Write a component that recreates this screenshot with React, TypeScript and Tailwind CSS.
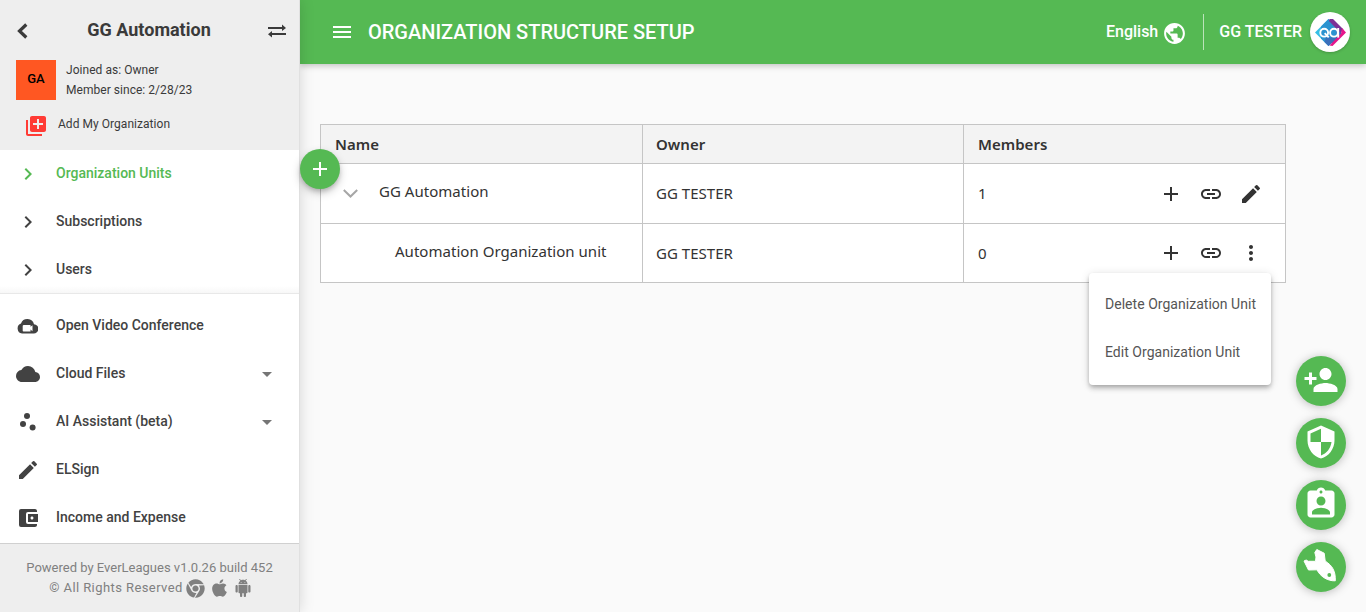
import type { ReactNode } from "react";
import {
  MdAccountBalanceWallet,
  MdAdd,
  MdArrowDropDown,
  MdAssignmentInd,
  MdChevronRight,
  MdCloud,
  MdEdit,
  MdLibraryAdd,
  MdLink,
  MdMenu,
  MdMoreVert,
  MdPublic,
  MdScatterPlot,
  MdSecurity,
} from "react-icons/md";
import { FaApple, FaChrome } from "react-icons/fa";

function BackIcon() {
  return (
    <svg className="mt-0.5 h-4 w-3" viewBox="0 0 12 16" fill="none" stroke="currentColor" strokeWidth="3.200">
      <path d="M10.300 1.500 3.500 8l6.800 6.500" />
    </svg>
  );
}

function SwapIcon() {
  return (
    <svg className="mt-0.5 h-[14px] w-[18px]" viewBox="0 0 18 14" fill="currentColor">
      <path d="M0 3h14V.5L18 4l-4 3V5H0zM18 9H4V7L0 10.200 4 13.500V11h14z" />
    </svg>
  );
}

function CloudCameraIcon() {
  return (
    <svg className="mr-px h-[15px] w-[21px]" viewBox="0 0 21 15">
      <path
        fill="currentColor"
        d="M17 5.200A6.800 6.800 0 0 0 4 4.500a5.200 5.200 0 0 0 1 10h11.500a4.600 4.600 0 0 0 .5-9.300z"
      />
      <path fill="#fff" d="M6.500 6h7v1.800L15.500 6.200v6l-2-1.600V12.500h-7a.8.8 0 0 1-.8-.8v-5z" />
    </svg>
  );
}

function AndroidIcon() {
  return (
    <svg className="h-[18px] w-[18px]" viewBox="0 0 24 24" fill="currentColor">
      <path d="M6 18c0 .55.45 1 1 1h1v3.5c0 .83.67 1.500 1.500 1.500s1.500-.67 1.500-1.500V19h2v3.500c0 .83.67 1.500 1.500 1.500s1.500-.67 1.500-1.500V19h1c.55 0 1-.45 1-1V8H6v10zM3.500 8C2.670 8 2 8.670 2 9.500v7c0 .83.67 1.500 1.500 1.500S5 17.330 5 16.500v-7C5 8.670 4.330 8 3.500 8zm17 0c-.83 0-1.500.67-1.500 1.500v7c0 .83.67 1.500 1.500 1.500s1.500-.67 1.500-1.500v-7c0-.83-.67-1.500-1.500-1.500zm-4.970-5.840l1.300-1.300c.2-.2.2-.51 0-.71-.2-.2-.51-.2-.71 0l-1.480 1.480C13.850 1.230 12.950 1 12 1c-.96 0-1.860.23-2.660.63L7.850.15c-.2-.2-.51-.2-.71 0-.2.2-.2.51 0 .71l1.310 1.310C6.970 3.260 6 5.010 6 7h12c0-1.990-.97-3.750-2.470-4.840zM10 5H9V4h1v1zm5 0h-1V4h1v1z" />
    </svg>
  );
}

function PersonAddIcon() {
  return (
    <svg className="h-9 w-9" viewBox="0 0 24 24" fill="currentColor">
      <path d="M15 12c2.210 0 4-1.790 4-4s-1.790-4-4-4-4 1.790-4 4 1.790 4 4 4zm-9-2V7H4v3H1v2h3v3h2v-3h3v-2H6zm9 4c-2.670 0-8 1.340-8 4v2h16v-2c0-2.660-5.330-4-8-4z" />
    </svg>
  );
}

function RocketIcon() {
  return (
    <svg className="h-9 w-9" viewBox="0 0 36 36">
      <path
        fill="currentColor"
        stroke="currentColor"
        strokeLinejoin="round"
        d="M1 13 3.200 12l2 1.300H12.500L13 9 11.800 4.500 13.800 1.500 21.200 5.200 22.200 13 C26 15.500 28.500 18 29.800 20.500 31.800 24 32.500 28 32.300 32.800 28.500 33 25 32 21.500 30 18 27.800 15.500 25 14 21.800L5.500 22z"
      />
      <circle cx="26.300" cy="27" r="1.900" fill="#55b953" />
    </svg>
  );
}

function AvatarLogo() {
  return (
    <svg className="h-8 w-8" viewBox="0 0 32 32">
      <path fill="#36bfe6" d="M14.500 3 1 16.500l13.500 13.500 3-3V6z" />
      <path fill="#3a66b4" d="M17.500 6v21l2 0L27.500 18 26 14z" />
      <path fill="#2b93d0" d="M14.500 3 7 10.500v12l7.500 7.500 3-3 5-5V11z" />
      <path fill="#3b6fba" d="M12 21.500h12l-9.500 8.500-4-4z" />
      <path fill="#7d3096" d="M15.500 3H19l10.500 10.500L26.500 17 15 5z" />
      <path fill="#e6168b" d="m28 12 4 4.500L18.500 30 15.500 29.500 27 17.500z" />
      <g fill="none" stroke="#fff" strokeWidth="1.900">
        <circle cx="10.200" cy="16.700" r="3.900" />
        <path d="m10.700 17.200 4 4.200" />
        <circle cx="20" cy="16.700" r="3.900" />
        <path d="M24.200 12v9.600" />
      </g>
    </svg>
  );
}

function NavItem({
  icon,
  label,
  active = false,
  expandable = false,
}: {
  icon: ReactNode;
  label: string;
  active?: boolean;
  expandable?: boolean;
}) {
  return (
    <a
      className={
        active
          ? "flex h-12 shrink-0 items-center pl-4 text-[#55b953]"
          : "flex h-12 shrink-0 items-center pl-4 text-[#424242]"
      }
    >
      <span className="flex w-6 shrink-0 justify-center">{icon}</span>
      <span className="ml-4 -mt-0.5 flex-1 text-sm font-medium">{label}</span>
      {expandable && <MdArrowDropDown className="mr-5 h-6 w-6 text-[#757575]" />}
    </a>
  );
}

function Sidebar() {
  return (
    <aside className="z-20 flex h-full w-[300px] shrink-0 flex-col border-r border-[#e0e0e0] bg-white shadow-[0_0_14px_rgba(0,0,0,0.15)]">
      <div className="h-[150px] shrink-0 bg-[#eeeeee] text-[#3a3a3a]">
        <div className="flex h-[60px] items-center pl-4 pr-[13px]">
          <BackIcon />
          <h1 className="flex-1 pl-0.5 text-center text-lg font-bold">GG Automation</h1>
          <SwapIcon />
        </div>
        <div className="flex pl-4">
          <div className="flex h-10 w-10 items-center justify-center bg-[#ff5722] pb-0.5 text-[13px] font-medium text-black">
            GA
          </div>
          <div className="ml-2.5 text-xs leading-5 tracking-[0.04px]">
            <p>Joined as: Owner</p>
            <p>Member since: 2/28/23</p>
          </div>
        </div>
        <div className="flex items-center pl-6 pt-3.5">
          <MdLibraryAdd className="h-6 w-6 text-[#ff3b35]" />
          <span className="-mt-1 ml-2.5 text-xs tracking-[0.04px]">Add My Organization</span>
        </div>
      </div>
      <nav className="flex min-h-0 flex-1 flex-col overflow-hidden">
        <div className="h-36 shrink-0 border-b border-[#e8e8e8] bg-[linear-gradient(to_top,#f7f7f7,#fff_7px)]">
          <NavItem active icon={<MdChevronRight className="h-6 w-6" />} label="Organization Units" />
          <NavItem icon={<MdChevronRight className="h-6 w-6" />} label="Subscriptions" />
          <NavItem icon={<MdChevronRight className="h-6 w-6" />} label="Users" />
        </div>
        <div className="pt-2">
          <NavItem icon={<CloudCameraIcon />} label="Open Video Conference" />
          <NavItem expandable icon={<MdCloud className="h-6 w-6" />} label="Cloud Files" />
          <NavItem expandable icon={<MdScatterPlot className="h-6 w-6" />} label="AI Assistant (beta)" />
          <NavItem icon={<MdEdit className="h-6 w-6" />} label="ELSign" />
          <NavItem icon={<MdAccountBalanceWallet className="h-6 w-6" />} label="Income and Expense" />
        </div>
      </nav>
      <footer className="flex h-[69px] shrink-0 flex-col items-center border-t border-[#d0d0d0] bg-[#eeeeee] pt-3.5 text-[13px] leading-5 text-[#808080]">
        <p>Powered by EverLeagues v1.0.26 build 452</p>
        <div className="flex items-center pl-0.5">
          <span className="tracking-[0.42px]">© All Rights Reserved</span>
          <FaChrome className="ml-[3px] h-[19px] w-[19px]" />
          <FaApple className="ml-1.5 h-5 w-[17px]" />
          <span className="ml-1.5">
            <AndroidIcon />
          </span>
        </div>
      </footer>
    </aside>
  );
}

function TopBar() {
  return (
    <header className="z-10 flex h-16 shrink-0 items-center bg-[#55b953] pl-[30px] pr-4 text-white shadow-[0_2px_6px_rgba(0,0,0,0.22)]">
      <MdMenu className="h-6 w-6" />
      <h2 className="ml-3.5 flex-1 text-xl font-medium">ORGANIZATION STRUCTURE SETUP</h2>
      <span className="text-base font-medium">English</span>
      <MdPublic className="ml-1 mt-0.5 h-[25px] w-[25px]" />
      <span className="ml-4 h-9 w-px bg-white/60" />
      <span className="ml-[15px] text-base font-medium">GG TESTER</span>
      <span className="ml-2 flex h-10 w-10 items-center justify-center rounded-full bg-white shadow-[0_1px_3px_rgba(0,0,0,0.2)]">
        <AvatarLogo />
      </span>
    </header>
  );
}

function RowActions({ last }: { last: ReactNode }) {
  return (
    <div className="flex gap-4">
      <MdAdd className="h-6 w-6" />
      <MdLink className="h-6 w-6" />
      {last}
    </div>
  );
}

function OptionsMenu() {
  return (
    <div className="absolute -right-2 top-8 z-10 w-[182px] rounded bg-white pb-[9px] pt-[7px] font-[Roboto,sans-serif] text-sm text-[#555] shadow-[0_2px_4px_-1px_rgba(0,0,0,0.2),0_4px_5px_rgba(0,0,0,0.14),0_1px_10px_rgba(0,0,0,0.12)]">
      <div className="flex h-12 items-center whitespace-nowrap pl-4">Delete Organization Unit</div>
      <div className="flex h-12 items-center whitespace-nowrap pl-4">Edit Organization Unit</div>
    </div>
  );
}

function UnitsTable() {
  return (
    <div className="grid w-[966px] grid-cols-[322px_321px_322px] border-l border-t border-[#c5c5c5] bg-white font-['Noto_Sans',sans-serif] text-[15px] tracking-[0.03px] text-[#333] *:border-b *:border-r *:border-[#c5c5c5]">
      <div className="flex h-[39px] items-center bg-[#f3f3f3] pl-3.5 font-semibold">Name</div>
      <div className="flex items-center bg-[#f3f3f3] pl-[13px] font-semibold">Owner</div>
      <div className="flex items-center bg-[#f3f3f3] pl-3.5 font-semibold">Members</div>

      <div className="flex h-[60px] items-center pb-1 pl-[22px]">
        <svg className="mt-1 h-[9px] w-[15px]" viewBox="0 0 15 9" fill="none" stroke="#a6a6a6" strokeWidth="2">
          <path d="m.8 1 6.700 6.500L14.200 1" />
        </svg>
        <span className="ml-[21px]">GG Automation</span>
      </div>
      <div className="flex items-center pl-[13px]">GG TESTER</div>
      <div className="flex items-center justify-between pl-3.5 pr-[22px]">
        <span>1</span>
        <RowActions last={<MdEdit className="h-6 w-6" />} />
      </div>

      <div className="flex h-[59px] items-center pb-1 pl-[74px]">Automation Organization unit</div>
      <div className="flex items-center pl-[13px]">GG TESTER</div>
      <div className="flex items-center justify-between pl-3.5 pr-[22px]">
        <span>0</span>
        <RowActions
          last={
            <div className="relative">
              <MdMoreVert className="h-6 w-6" />
              <OptionsMenu />
            </div>
          }
        />
      </div>
    </div>
  );
}

function FloatingButton({ children }: { children: ReactNode }) {
  return (
    <button className="flex h-[50px] w-[50px] items-center justify-center rounded-full bg-[#55b953] pb-[3px] text-white shadow-[0_1px_10px_rgba(0,0,0,0.25)]">
      {children}
    </button>
  );
}

export default function App() {
  return (
    <div className="relative flex h-[612px] w-[1366px] overflow-hidden bg-[#fafafa] font-[Roboto,sans-serif]">
      <Sidebar />
      <div className="flex flex-1 flex-col">
        <TopBar />
        <main className="pl-5 pt-[60px]">
          <UnitsTable />
        </main>
      </div>
      <button className="absolute left-[300px] top-[149px] z-30 flex h-10 w-10 items-center justify-center rounded-full bg-[#55b953] text-white shadow-[0_3px_5px_-1px_rgba(0,0,0,0.2),0_4px_10px_rgba(0,0,0,0.2)]">
        <MdAdd className="h-6 w-6" />
      </button>
      <div className="absolute right-5 top-[356px] z-30 flex flex-col gap-3">
        <FloatingButton>
          <PersonAddIcon />
        </FloatingButton>
        <FloatingButton>
          <MdSecurity className="h-9 w-9" />
        </FloatingButton>
        <FloatingButton>
          <MdAssignmentInd className="h-9 w-9" />
        </FloatingButton>
        <FloatingButton>
          <RocketIcon />
        </FloatingButton>
      </div>
    </div>
  );
}
